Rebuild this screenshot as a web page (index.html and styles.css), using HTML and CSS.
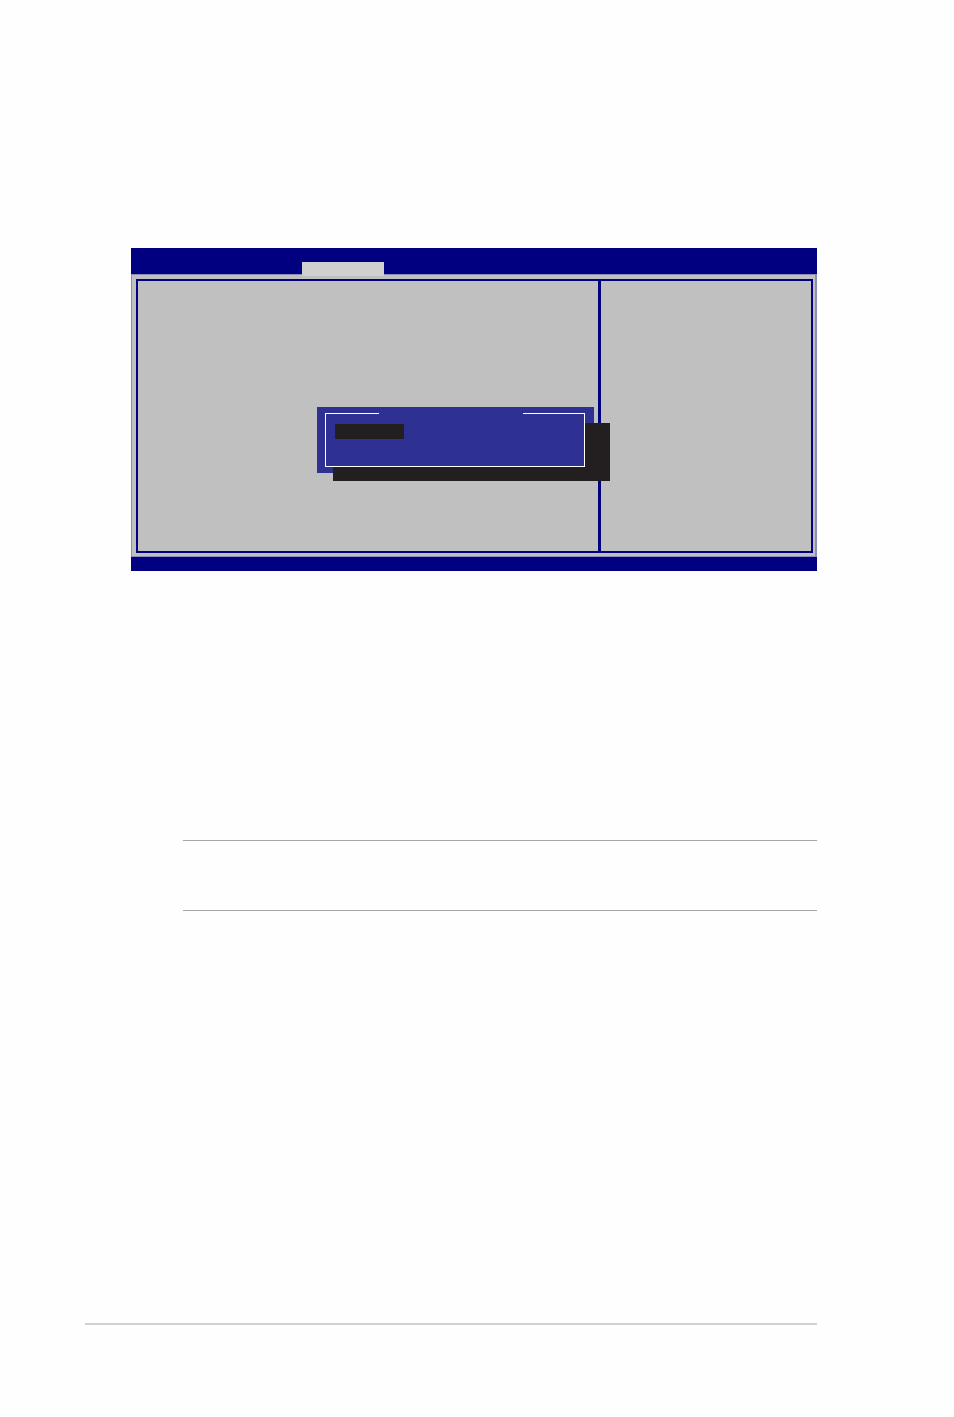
FILE: index.html
```html
<!DOCTYPE html>
<html>
<head>
<meta charset="utf-8">
<link rel="stylesheet" href="styles.css">
</head>
<body>
<div class="page">
  <div class="screen">
    <div class="titlebar"><div class="tab"></div></div>
    <div class="panel">
      <div class="box">
        <div class="left"></div>
        <div class="divider"></div>
        <div class="right"></div>
      </div>
    </div>
    <div class="bottombar"></div>
    <div class="dialog">
      <div class="frame">
        <div class="frame-title"></div>
        <div class="highlight"></div>
      </div>
    </div>
  </div>
  <div class="note">
    <div class="rule"></div>
    <div class="note-body"></div>
    <div class="rule"></div>
  </div>
  <div class="footer-rule"></div>
</div>
</body>
</html>
```

FILE: styles.css
```css
html, body {
  margin: 0;
  padding: 0;
  background: #fefefe;
  font-family: "Liberation Sans", Arial, sans-serif;
}
.page {
  width: 954px;
  height: 1417px;
  display: flex;
  flex-direction: column;
}
.screen {
  position: relative;
  margin: 248px 0 0 131px;
  width: 686px;
  height: 323px;
  background: #000080;
  display: flex;
  flex-direction: column;
}
.titlebar {
  height: 26px;
  display: flex;
}
.tab {
  margin: 14px 0 0 171px;
  width: 82px;
  height: 14px;
  background: #d0d0d0;
  position: relative;
  z-index: 1;
  margin-bottom: -2px;
}
.panel {
  margin: 0;
  height: 283px;
  box-sizing: border-box;
  background: #c0c0c0;
  border: 1px solid #8c8cbc;
  border-right-width: 2px;
  padding: 4px 2px 3px 4px;
  display: flex;
}
.box {
  flex: 1;
  border: 2px solid #000080;
  display: flex;
}
.left {
  width: 460px;
}
.divider {
  width: 3px;
  background: #000080;
}
.right {
  flex: 1;
}
.bottombar {
  flex: 1;
}
.dialog {
  position: absolute;
  left: 186px;
  top: 159px;
  width: 277px;
  height: 66px;
  background: #2e3192;
  z-index: 2;
}
.dialog::before {
  content: "";
  position: absolute;
  left: 16px;
  top: 16px;
  width: 277px;
  height: 58px;
  background: #231f20;
  z-index: -1;
}
.frame {
  position: absolute;
  left: 8px;
  top: 6px;
  width: 260px;
  height: 54px;
  box-sizing: border-box;
  border: 1px solid #ffffff;
  background: #2e3192;
}
.frame-title {
  position: absolute;
  left: 53px;
  top: -1px;
  width: 144px;
  height: 1px;
  background: #2e3192;
}
.highlight {
  position: absolute;
  left: 9px;
  top: 10px;
  width: 69px;
  height: 15px;
  background: #231f20;
}
.note {
  margin: 269px 0 0 183px;
  width: 634px;
  display: flex;
  flex-direction: column;
}
.rule {
  height: 1px;
  background: #a6a6a6;
}
.note-body {
  height: 69px;
}
.footer-rule {
  margin: 412px 0 0 85px;
  width: 732px;
  height: 2px;
  background: #d0d0d0;
}
```
